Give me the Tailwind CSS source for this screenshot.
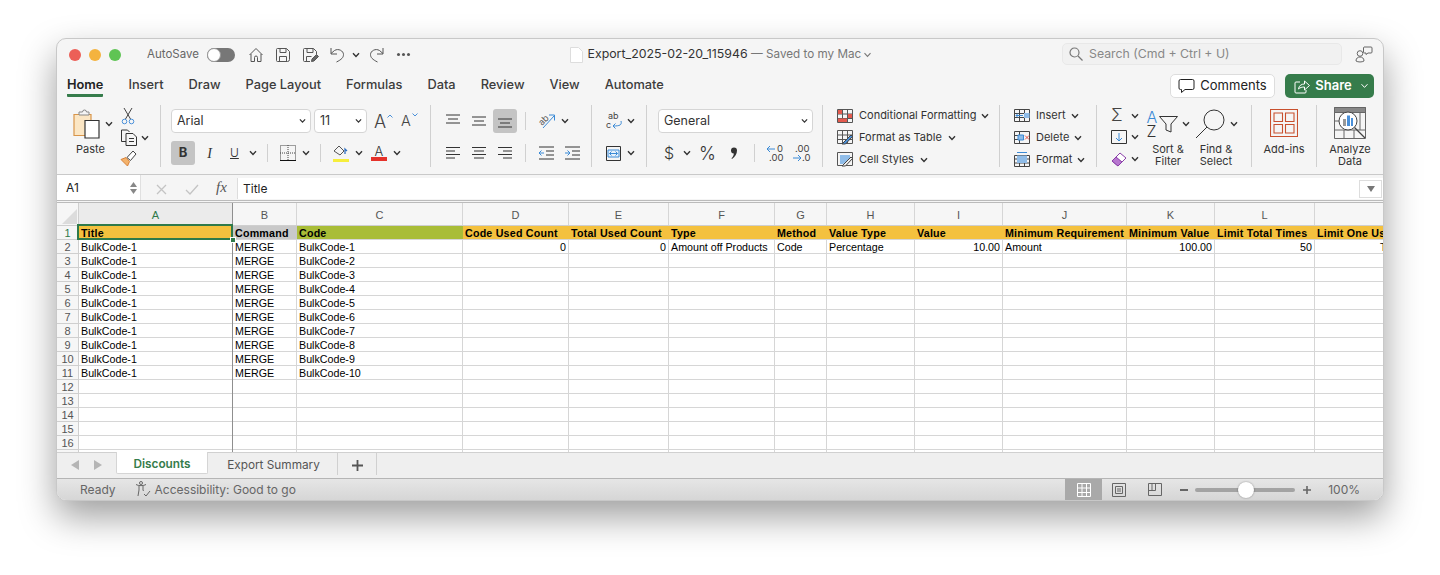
<!DOCTYPE html>
<html lang="en">
<head>
<meta charset="UTF-8">
<title>Export_2025-02-20_115946</title>
<script src="https://cdn.jsdelivr.net/npm/@tailwindcss/browser@4"></script>
</head>
<body class="bg-white h-[575px] overflow-hidden font-['Inter','Liberation_Sans',sans-serif]">

<svg class="hidden">
  <symbol id="cv" viewBox="0 0 8 6"><path d="M1 1.200 4 4.400 7 1.200" fill="none" stroke="#333" stroke-width="1.400"/></symbol>
</svg>

<div class="pt-[38px] px-[56px]">
  <!-- window -->
  <div class="relative w-[1328px] h-[463px] rounded-[10px] bg-[#f5f5f5] border border-[#c8c8c8] overflow-hidden flex flex-col shadow-[0_16px_36px_rgba(0,0,0,0.38)]" id="win">

    <!-- title bar -->
    <div class="h-[33px] pb-[2px] shrink-0 flex items-center relative">
      <div class="flex gap-2 ml-[12px]">
        <span class="w-3 h-3 rounded-full bg-[#ec5f57]"></span>
        <span class="w-3 h-3 rounded-full bg-[#f4b33f]"></span>
        <span class="w-3 h-3 rounded-full bg-[#5fc454]"></span>
      </div>
      <span class="ml-[26px] text-[11.500px] text-[#666] w-[60px]">AutoSave</span>
      <span class="relative w-[28px] h-[14px] rounded-full bg-[#777]"><span class="absolute left-0 top-0 w-[14px] h-[14px] rounded-full bg-white border border-[#999]"></span></span>
      <svg class="ml-[13px]" width="16" height="16" viewBox="0 0 16 16" fill="none" stroke="#555"><path d="M1.500 8 8 1.500 14.500 8M3 7v7.500h3.500V10.500a1.500 1.500 0 013 0v4H13V7"/></svg>
      <svg class="ml-[11px]" width="16" height="16" viewBox="0 0 16 16" fill="none" stroke="#555"><path d="M2.500 1.500h9l3 3v8a2 2 0 01-2 2h-10a1 1 0 01-1-1v-11a1 1 0 011-1zM5 1.500v4h6v-4M4.500 14.500v-5h7v5"/></svg>
      <svg class="ml-[11px]" width="17" height="16" viewBox="0 0 17 16" fill="none" stroke="#555"><path d="M8 14.500H2.500a1 1 0 01-1-1v-11a1 1 0 011-1h9l3 3v3M5 1.500v4h6v-4M4.500 14v-4.500h5"/><path d="M9.500 14.500l.5-2.500 4.500-4.500 2 2-4.500 4.500z" fill="#666"/></svg>
      <svg class="ml-[11px]" width="15" height="16" viewBox="0 0 15 16" fill="none" stroke="#555"><path d="M1 1v6h6M1 6.500 4.500 3.500c4-2.500 9 .5 9 4 0 3-2 5-7 7.500"/></svg>
      <svg class="ml-[7px]" width="8" height="6"><use href="#cv"/></svg>
      <svg class="ml-[9px]" width="15" height="16" viewBox="0 0 15 16" fill="none" stroke="#555"><path d="M14 1v6H8M14 6.500 10.500 3.500c-4-2.500-9 .5-9 4 0 3 2 5 7 7.500"/></svg>
      <span class="ml-[13px] flex gap-[2.500px]"><i class="w-[2.500px] h-[2.500px] rounded-full bg-[#555]"></i><i class="w-[2.500px] h-[2.500px] rounded-full bg-[#555]"></i><i class="w-[2.500px] h-[2.500px] rounded-full bg-[#555]"></i></span>
      <svg class="ml-[160px]" width="13" height="16" viewBox="0 0 13 16" fill="#fff" stroke="#ddd"><path d="M.5.500h8l4 4v11H.5z"/></svg>
      <span class="ml-[5px] text-[12.350px] text-[#333] whitespace-nowrap">Export_2025-02-20_115946 <span class="text-[#777] text-[11.700px]">— Saved to my Mac</span></span>
      <svg class="ml-[2px]" width="9" height="6" viewBox="0 0 8 6"><path d="M1 1.200 4 4.400 7 1.200" fill="none" stroke="#777" stroke-width="1.100"/></svg>
      <div class="absolute left-[1005px] top-[4px] w-[280px] h-[22px] rounded-[5px] bg-[#f1f1f1] border border-[#e8e8e8] flex items-center pl-[6px]">
        <svg width="14" height="14" viewBox="0 0 14 14" fill="none" stroke="#777" stroke-width="1.200"><circle cx="5.500" cy="5.500" r="4.500"/><path d="M9 9l4.500 4.500"/></svg>
        <span class="ml-[6px] text-[12.300px] text-[#888] whitespace-nowrap">Search (Cmd + Ctrl + U)</span>
      </div>
      <svg class="absolute left-[1298px] top-[6px]" width="18" height="18" viewBox="0 0 18 18" fill="none" stroke="#666"><circle cx="5" cy="8.500" r="2.800"/><path d="M1 16c0-3 2-4 4-4s4 1 4 4c-2 1.300-6 1.300-8 0zM9 2h7a1 1 0 011 1v4a1 1 0 01-1 1h-3l-2 1.500V8H9.500a1 1 0 01-1-1V3a1 1 0 01.5-1z"/></svg>
    </div>

    <!-- tabs -->
    <div class="h-[29px] shrink-0 flex items-start pl-[10px] relative text-[12.800px] font-medium text-[#3c3c3c]">
      <div class="flex gap-[25px] pt-[3px]">
        <span class="font-semibold text-[#222] border-b-[3px] border-[#367c4b] h-[22px] rounded-b-[1px]">Home</span>
        <span>Insert</span><span>Draw</span><span>Page Layout</span><span>Formulas</span><span>Data</span><span>Review</span><span>View</span><span>Automate</span>
      </div>
      <div class="absolute left-[1113px] top-[2px] w-[105px] h-[24px] rounded-[5px] bg-white border border-[#ddd] flex items-center justify-center gap-[5px] font-normal text-[13px] text-[#222]">
        <svg width="17" height="16" viewBox="0 0 17 16" fill="none" stroke="#222"><path d="M2.500 1.500h12a1.500 1.500 0 011.500 1.500v7a1.500 1.500 0 01-1.500 1.500H7L3.500 14.500v-3h-1A1.500 1.500 0 011 10V3a1.500 1.500 0 011.500-1.500z"/></svg>
        Comments
      </div>
      <div class="absolute left-[1228px] top-[2px] w-[89px] h-[24px] pl-[4px] rounded-[5px] bg-[#367c4b] flex items-center justify-center gap-[5px] font-semibold text-[13px] text-white">
        <svg width="16" height="15" viewBox="0 0 16 15" fill="none" stroke="#fff"><path d="M6 3H2a1 1 0 00-1 1v9a1 1 0 001 1h9a1 1 0 001-1v-2M4.500 10c.5-3.500 3-5 6-5V2l5 4.500-5 4.500V8c-2.500 0-4.500.5-6 2z"/></svg>
        Share
        <svg class="ml-[3px]" width="9" height="6" viewBox="0 0 8 6"><path d="M1 1.200 4 4.400 7 1.200" fill="none" stroke="#fff" stroke-width="1"/></svg>
      </div>
    </div>

    <!-- ribbon -->
    <div class="h-[74px] shrink-0 flex border-b border-[#c9c9c9] text-[#333]">

      <!-- clipboard -->
      <div class="w-[104px] h-[62px] mt-[4px] border-r border-[#d0d0d0] flex pl-[14px] shrink-0">
        <div class="w-[42px] flex flex-col pt-[3px]">
          <div class="flex items-start">
            <svg class="shrink-0" width="30" height="32" viewBox="0 0 30 32" fill="none"><path d="M3 6.500h17v21H3z" fill="#fbe6c4" stroke="#d8954a" stroke-width="1.200"/><path d="M8 6V4h3.500a2 2 0 014 0H18v3H8z" fill="#f5f5f5" stroke="#888"/><path d="M14 12.500h14V30H14z" fill="#fff" stroke="#333" stroke-width="1.200"/></svg>
            <svg class="ml-[4px] mt-[13px]" width="8" height="6"><use href="#cv"/></svg>
          </div>
          <span class="text-[11px] mt-[2px] ml-[5px] leading-[14px]">Paste</span>
        </div>
        <div class="flex flex-col items-start ml-[7px] gap-[4px] pt-[2px]">
          <svg class="ml-[1px]" width="14" height="18" viewBox="0 0 14 18" fill="none" stroke="#444"><path d="M3 1l6.500 11M11 1 4.500 12"/><circle cx="3.500" cy="14.500" r="2.300" stroke="#4a90d9"/><circle cx="10.500" cy="14.500" r="2.300" stroke="#4a90d9"/></svg>
          <div class="flex items-center">
            <svg width="18" height="17" viewBox="0 0 18 17" fill="none" stroke="#333"><path d="M6 12.500H1.500V1h6l2 2"/><path d="M6 4.500h7l3.500 3.500v8.500H6zM9 9.500h5M9 12.500h5"/></svg>
            <svg class="ml-[3px]" width="8" height="6"><use href="#cv"/></svg>
          </div>
          <svg width="17" height="16" viewBox="0 0 17 16" fill="none"><path d="M1 9.500l5-2 3.500 4-2 4.500-6.500-6.500z" fill="#f3b26b" stroke="#d8823a"/><path d="M7 7.500l6-6.500 3 3-5.500 6.500z" fill="#fff" stroke="#444"/></svg>
        </div>
      </div>

      <!-- font -->
      <div class="w-[270px] h-[62px] mt-[4px] border-r border-[#d0d0d0] pl-[10px] pt-[4px] shrink-0">
        <div class="flex items-center h-[24px]">
          <div class="w-[140px] h-[24px] rounded-[4px] bg-white border border-[#d5d5d5] flex items-center justify-between pl-[5px] pr-[4px] text-[12.500px]"><span>Arial</span><svg width="7" height="6"><use href="#cv"/></svg></div>
          <div class="ml-[3px] w-[53px] h-[24px] rounded-[4px] bg-white border border-[#d5d5d5] flex items-center justify-between pl-[5px] pr-[4px] text-[12.500px]"><span>11</span><svg width="7" height="6"><use href="#cv"/></svg></div>
          <span class="ml-[7px] text-[18px] font-light text-[#444] relative w-[20px]">A<svg class="absolute left-[13px] top-[6px]" width="6" height="4" viewBox="0 0 6 4"><path d="M.5 3.500 3 1l2.500 2.500" fill="none" stroke="#4a90d9"/></svg></span>
          <span class="ml-[7px] text-[14.500px] font-light text-[#444] relative w-[20px]">A<svg class="absolute left-[11px] top-[3px]" width="6" height="4" viewBox="0 0 6 4"><path d="M.5.500 3 3 5.500.5" fill="none" stroke="#4a90d9"/></svg></span>
        </div>
        <div class="flex items-center h-[24px] mt-[8px]">
          <span class="w-[24px] h-[24px] rounded-[3px] bg-[#c4c4c4] flex items-center justify-center text-[13px] font-bold">B</span>
          <span class="w-[13px] ml-[8px] text-[14px] italic font-['Liberation_Serif',serif] text-center">I</span>
          <span class="ml-[14px] w-[9px] text-[12px] underline font-light">U</span>
          <svg class="ml-[10px]" width="8" height="6"><use href="#cv"/></svg>
          <span class="w-px h-[18px] bg-[#d0d0d0] ml-[10px]"></span>
          <svg class="ml-[12px]" width="16" height="16" viewBox="0 0 16 16" fill="none" stroke="#444" stroke-dasharray="1 1"><path d="M.5.500h15v15H.5zM8 0v16M0 8h16"/><path d="M0 15.500h16" stroke-dasharray="none" stroke="#111"/></svg>
          <svg class="ml-[6px]" width="8" height="6"><use href="#cv"/></svg>
          <span class="w-px h-[18px] bg-[#d0d0d0] ml-[10px]"></span>
          <svg class="ml-[12px]" width="16" height="18" viewBox="0 0 16 18" fill="none"><path d="M1 7l5-5 5 5-4 4z" stroke="#555"/><path d="M12 10V5l2 2" stroke="#2f6fc0" stroke-width="1.300"/><path d="M0 15h16v3H0z" fill="#f6ee3c"/></svg>
          <svg class="ml-[6px]" width="8" height="6"><use href="#cv"/></svg>
          <div class="ml-[8px] w-[16px] h-[18px] flex flex-col items-center"><span class="text-[13px] leading-[14px] font-light">A</span><span class="w-[16px] h-[4px] bg-[#e5322a] mt-[-1px]"></span></div>
          <svg class="ml-[6px]" width="8" height="6"><use href="#cv"/></svg>
        </div>
      </div>

      <!-- alignment -->
      <div class="w-[161px] h-[62px] mt-[4px] border-r border-[#d0d0d0] pl-[14px] pt-[4px] shrink-0">
        <div class="flex items-center h-[24px]">
          <svg width="16" height="16" viewBox="0 0 16 16" stroke="#333"><path d="M1 2h14M3 6h10M1 10h14"/></svg>
          <svg class="ml-[10px]" width="16" height="16" viewBox="0 0 16 16" stroke="#333"><path d="M1 4h14M3 8h10M1 12h14"/></svg>
          <span class="ml-[6px] w-[24px] h-[24px] rounded-[3px] bg-[#c4c4c4] flex items-center justify-center"><svg width="16" height="16" viewBox="0 0 16 16" stroke="#333"><path d="M1 6h14M3 10h10M1 14h14"/></svg></span>
          <span class="w-px h-[18px] bg-[#d0d0d0] ml-[8px]"></span>
          <svg class="ml-[12px] overflow-visible" width="18" height="18" viewBox="0 0 18 18" fill="none" stroke="#555"><text x="1" y="11" font-size="9" fill="#555" stroke="none" transform="rotate(-45 6 9)">ab</text><path d="M5 16 16 4M11 3H16.500V8.500" stroke="#3a8ad6"/></svg>
          <svg class="ml-[5px]" width="8" height="6"><use href="#cv"/></svg>
        </div>
        <div class="flex items-center h-[24px] mt-[8px]">
          <svg width="16" height="16" viewBox="0 0 16 16" stroke="#333"><path d="M1 2.500h14M1 6h9M1 9.500h14M1 13h9"/></svg>
          <svg class="ml-[10px]" width="16" height="16" viewBox="0 0 16 16" stroke="#333"><path d="M1 2.500h14M3 6h10M1 9.500h14M3 13h10"/></svg>
          <svg class="ml-[10px]" width="16" height="16" viewBox="0 0 16 16" stroke="#333"><path d="M1 2.500h14M6 6h9M1 9.500h14M6 13h9"/></svg>
          <span class="w-px h-[18px] bg-[#d0d0d0] ml-[12px]"></span>
          <svg class="ml-[12px]" width="16" height="14" viewBox="0 0 16 14" fill="none"><path d="M1 1h15M8 5h8M8 9h8M1 13h15" stroke="#333"/><path d="M6 7H1M3.500 4.500 1 7l2.500 2.500" stroke="#3a8ad6"/></svg>
          <svg class="ml-[10px]" width="16" height="14" viewBox="0 0 16 14" fill="none"><path d="M1 1h15M8 5h8M8 9h8M1 13h15" stroke="#333"/><path d="M1 7h5M3.500 4.500 6 7 3.500 9.500" stroke="#3a8ad6"/></svg>
        </div>
      </div>

      <!-- wrap / merge -->
      <div class="w-[55px] h-[62px] mt-[4px] border-r border-[#d0d0d0] pl-[14px] pt-[4px] shrink-0">
        <div class="flex items-center h-[24px]">
          <svg class="overflow-visible" width="16" height="18" viewBox="0 0 16 18" fill="none"><text x="2" y="7" font-size="9" fill="#444">ab</text><text x="0" y="16" font-size="9" fill="#444">c</text><path d="M15 9c1 4-1 5-8 5M9.500 11.500 7 14l2.500 2.500" stroke="#3a8ad6"/></svg>
          <svg class="ml-[5px]" width="8" height="6"><use href="#cv"/></svg>
        </div>
        <div class="flex items-center h-[24px] mt-[8px]">
          <svg width="15" height="15" viewBox="0 0 15 15" fill="none" stroke="#333"><path d="M.5.500h14v14H.5z"/><path d="M2 4h11v7H2z" fill="#e7f1fb" stroke="#3a8ad6"/><path d="M3.500 7.500h8M5.500 5.500l-2 2 2 2M9.500 5.500l2 2-2 2" stroke="#3a8ad6"/></svg>
          <svg class="ml-[6px]" width="8" height="6"><use href="#cv"/></svg>
        </div>
      </div>

      <!-- number -->
      <div class="w-[176px] h-[62px] mt-[4px] border-r border-[#d0d0d0] pl-[11px] pt-[4px] shrink-0">
        <div class="w-[155px] h-[24px] rounded-[4px] bg-white border border-[#d5d5d5] flex items-center justify-between pl-[5px] pr-[4px] text-[12.500px]"><span>General</span><svg width="7" height="6"><use href="#cv"/></svg></div>
        <div class="flex items-center h-[24px] mt-[8px]">
          <span class="ml-[6px] w-[10px] text-[16px] font-light">$</span>
          <svg class="ml-[9px]" width="8" height="6"><use href="#cv"/></svg>
          <span class="ml-[8px] text-[18px] font-light w-[18px]">%</span>
          <svg class="ml-[13px]" width="8" height="13" viewBox="0 0 8 13" fill="#333"><path d="M1 3.500a3 3 0 116 0c0 3.500-2 6.500-5 8.500l-.5-.7c1.500-1.500 2.300-3 2.300-4.800A3 3 0 011 3.500z"/></svg>
          <span class="w-px h-[18px] bg-[#d0d0d0] ml-[16px]"></span>
          <div class="ml-[11px] w-[18px] relative h-[18px] text-[9.500px] leading-[9px] text-[#444]"><span class="absolute left-[11px] top-0">0</span><span class="absolute left-[3px] top-[9px]">.00</span><svg class="absolute left-0 top-[1px]" width="10" height="8" viewBox="0 0 10 8" fill="none" stroke="#3a8ad6"><path d="M9 4H1M4 1 1 4l3 3"/></svg></div>
          <div class="ml-[8px] w-[18px] relative h-[18px] text-[9.500px] leading-[9px] text-[#444]"><span class="absolute left-[3px] top-0">.00</span><span class="absolute left-[10px] top-[9px]">.0</span><svg class="absolute left-0 top-[10px]" width="10" height="8" viewBox="0 0 10 8" fill="none" stroke="#3a8ad6"><path d="M1 4h8M6 1l3 3-3 3"/></svg></div>
        </div>
      </div>

      <!-- styles -->
      <div class="w-[177px] h-[62px] mt-[4px] border-r border-[#d0d0d0] pl-[14px] pt-[3px] flex flex-col gap-[7px] text-[11px] shrink-0">
        <div class="flex items-center h-[15px]">
          <svg width="16" height="14" viewBox="0 0 16 14" fill="#fff" stroke="#555"><path d="M.5.500h15v13H.5zM.5 5h15M.5 9.500h15M5.500.500v13M10.500.500v13" fill="none"/><path d="M1 1h4v4H1zM11 5h4v4h-4zM1 9.500h9v3.500H1z" fill="#e35a4e" stroke="none"/></svg>
          <span class="ml-[6px]">Conditional Formatting</span><svg class="ml-[5px]" width="8" height="6"><use href="#cv"/></svg>
        </div>
        <div class="flex items-center h-[15px]">
          <svg width="16" height="15" viewBox="0 0 16 15" fill="none" stroke="#555"><path d="M.5.500h15v13H.5zM.5 5h15M.5 9.500h15M5.500.500v13M10.500.500v13"/><path d="M5 14 14 5l1.500 1.500-7 7.500z" fill="#4a90d9" stroke="#444"/></svg>
          <span class="ml-[6px]">Format as Table</span><svg class="ml-[6px]" width="8" height="6"><use href="#cv"/></svg>
        </div>
        <div class="flex items-center h-[15px]">
          <svg width="16" height="15" viewBox="0 0 16 15" fill="none" stroke="#555"><path d="M.5.500h15v13H.5z"/><path d="M3 3h10v4L6 12H3z" fill="#8fbce8" stroke="none"/><path d="M5 14 14 5l1.500 1.500-7 7.500z" fill="#eee" stroke="#444"/></svg>
          <span class="ml-[6px]">Cell Styles</span><svg class="ml-[6px]" width="8" height="6"><use href="#cv"/></svg>
        </div>
      </div>

      <!-- cells -->
      <div class="w-[97px] h-[62px] mt-[4px] border-r border-[#d0d0d0] pl-[14px] pt-[3px] flex flex-col gap-[7px] text-[11px] shrink-0">
        <div class="flex items-center h-[15px]">
          <svg width="16" height="13" viewBox="0 0 16 13" fill="none" stroke="#444"><path d="M.5.500h15v12H.5zM.5 4.500h15M.5 8.500h15M5.500.500v12M10.500.500v12"/><path d="M10 4h5.500v5H10z" fill="#8fbce8" stroke="none"/><path d="M9 6.500H2M4 4.500l-2 2 2 2" stroke="#3a8ad6"/></svg>
          <span class="ml-[6px]">Insert</span><svg class="ml-[5px]" width="8" height="6"><use href="#cv"/></svg>
        </div>
        <div class="flex items-center h-[15px]">
          <svg width="16" height="13" viewBox="0 0 16 13" fill="none" stroke="#444"><path d="M.5.500h15v12H.5zM.5 4.500h9M.5 8.500h9M5.500.500v12"/><path d="M4 4h5.500v5H4z" fill="#8fbce8" stroke="#3a8ad6"/><path d="M11 4.500l4 4M15 4.500l-4 4" stroke="#e3554a"/></svg>
          <span class="ml-[6px]">Delete</span><svg class="ml-[5px]" width="8" height="6"><use href="#cv"/></svg>
        </div>
        <div class="flex items-center h-[15px]">
          <svg width="16" height="15" viewBox="0 0 16 15" fill="none" stroke="#444"><path d="M.5 3.500h15v11H.5zM.5 7h15M.5 11h15M5.500 3.500v11M10.500 3.500v11"/><path d="M3 3.500h10V11H3z" fill="#8fbce8" stroke="none"/><path d="M3 .5h10" stroke="#3a8ad6"/></svg>
          <span class="ml-[6px]">Format</span><svg class="ml-[5px]" width="8" height="6"><use href="#cv"/></svg>
        </div>
      </div>

      <!-- editing -->
      <div class="w-[155px] h-[62px] mt-[4px] border-r border-[#d0d0d0] flex shrink-0">
        <div class="pl-[14px] w-[48px] pt-[2px] flex flex-col gap-[5px] shrink-0">
          <div class="flex items-center h-[17px]"><span class="w-[16px] text-[17px] font-light leading-[17px] text-[#444]">Σ</span><svg class="ml-[4px]" width="8" height="6"><use href="#cv"/></svg></div>
          <div class="flex items-center h-[17px]"><svg width="16" height="14" viewBox="0 0 16 14" fill="none" stroke="#333"><path d="M.5.500h15v13H.5z"/><path d="M8 3v8M5 8l3 3 3-3" stroke="#3a8ad6"/></svg><svg class="ml-[4px]" width="8" height="6"><use href="#cv"/></svg></div>
          <div class="flex items-center h-[17px]"><svg width="16" height="16" viewBox="0 0 16 16" stroke="#8a3fa8"><path d="M1 10 9 2l6 5-8 8z" fill="#fff"/><path d="M1 10 5 6l6 5-4 4z" fill="#b777cf"/></svg><svg class="ml-[4px]" width="8" height="6"><use href="#cv"/></svg></div>
        </div>
        <div class="w-[46px] flex flex-col items-center shrink-0">
          <div class="flex items-center h-[30px] mt-[4px]">
            <div class="relative w-[11px] h-[28px] text-[16px] leading-[14px] font-light shrink-0"><span class="absolute left-0 top-0 text-[#3a8ad6]">A</span><span class="absolute left-0 top-[14px] text-[#333]">Z</span></div>
            <svg class="shrink-0 ml-[1px]" width="19" height="17" viewBox="0 0 19 17" fill="none" stroke="#333"><path d="M.5.500h18L12 8v8l-5-2V8z"/></svg>
            <svg class="ml-[4px] shrink-0" width="8" height="6"><use href="#cv"/></svg>
          </div>
          <span class="text-[11px] leading-[12px] mt-[4px] text-center whitespace-nowrap">Sort &amp;<br>Filter</span>
        </div>
        <div class="w-[50px] flex flex-col items-center shrink-0">
          <div class="flex items-center h-[30px] mt-[4px]">
            <svg class="shrink-0" width="30" height="30" viewBox="0 0 30 30" fill="none" stroke="#333"><circle cx="19" cy="11" r="10"/><path d="M12 18 1 29"/></svg>
            <svg class="ml-[5px] shrink-0" width="8" height="6"><use href="#cv"/></svg>
          </div>
          <span class="text-[11px] leading-[12px] mt-[4px] text-center whitespace-nowrap">Find &amp;<br>Select</span>
        </div>
      </div>

      <!-- add-ins -->
      <div class="w-[65px] h-[62px] mt-[4px] border-r border-[#d0d0d0] flex flex-col items-center shrink-0">
        <svg class="mt-[4px]" width="28" height="28" viewBox="0 0 28 28" fill="none" stroke="#c8502e" stroke-width="1.100"><path d="M.5.500h27v27H.5zM4 4h8.500v8.500H4zM15.500 4H24v8.500h-8.500zM4 15.500h8.500V24H4zM15.500 15.500H24V24h-8.500z"/></svg>
        <span class="text-[11px] leading-[12px] mt-[6px]">Add-ins</span>
      </div>

      <!-- analyze -->
      <div class="flex-1 h-[62px] mt-[4px] flex flex-col items-center">
        <svg class="mt-[2px]" width="32" height="32" viewBox="0 0 32 32" fill="none" stroke="#666"><path d="M.5.500h31v31H.5z"/><path d="M.5.500h31v5H.5z" fill="#888"/><path d="M.5 14h5M.5 23h31M10 23v9M20 23v9M26 5v18"/><circle cx="14" cy="14" r="9" fill="#fff" stroke="#444"/><path d="M9 12h3v7H9z" fill="#999" stroke="none"/><path d="M13 8.500h3V19h-3z" fill="#4a90d9" stroke="none"/><path d="M17 11h2v8h-2z" fill="#4a90d9" stroke="none"/><path d="M20.500 20.500 31 31" stroke="#444" stroke-width="1.300"/></svg>
        <span class="text-[11px] leading-[12px] mt-[4px] text-center">Analyze<br>Data</span>
      </div>
    </div>

    <!-- formula bar -->
    <div class="h-[28px] shrink-0 flex border-b-[3px] border-double border-[#bbb]">
      <div class="w-[84px] h-[25px] bg-white pl-[9px] pr-[3px] flex items-center justify-between border-r border-[#e0e0e0] text-[12px] text-[#222]">
        A1
        <span class="flex flex-col gap-[2px]"><svg width="7" height="5" viewBox="0 0 7 5" fill="#888"><path d="M3.500 0 7 5H0z"/></svg><svg width="7" height="5" viewBox="0 0 7 5" fill="#888"><path d="M3.500 5 7 0H0z"/></svg></span>
      </div>
      <svg class="ml-[15px] mt-[9px]" width="11" height="11" viewBox="0 0 11 11" stroke="#c4c4c4" stroke-width="1.300"><path d="M1 1l9 9M10 1l-9 9"/></svg>
      <svg class="ml-[18px] mt-[9px]" width="14" height="11" viewBox="0 0 14 11" fill="none" stroke="#c4c4c4" stroke-width="1.300"><path d="M1 6l4 4 8-9"/></svg>
      <span class="ml-[17px] w-[20px] text-[15px] leading-[25px] italic font-['Liberation_Serif',serif] text-[#555]">fx</span>
      <div class="ml-px flex-1 h-[21px] mt-[3px] bg-white border-l border-[#ddd] pl-[5px] flex items-center justify-between text-[12px] text-[#222]">
        Title
        <span class="w-[23px] h-[18px] border border-[#ddd] bg-white mr-px flex items-center justify-center"><svg width="8" height="6" viewBox="0 0 8 6" fill="#777"><path d="M0 0h8L4 6z"/></svg></span>
      </div>
    </div>

    <!-- sheet -->
    <div class="flex-1 relative bg-white overflow-hidden" id="sheet">
      <div class="h-[23px] flex bg-[#f6f6f6] border-b border-[#cfcfcf] text-[11px] text-[#555] font-['Liberation_Sans',sans-serif]">
        <div class="w-[22px] shrink-0 relative border-r border-[#cfcfcf]"><svg class="absolute right-[1px] bottom-[1px]" width="15" height="15"><path d="M15 0v15H0z" fill="#dcdcdc"/></svg></div>
        <div class="flex-1 grid grid-cols-[154px_64px_166px_106px_100px_106px_52px_88px_88px_124px_88px_100px_160px]" id="colhead"></div>
      </div>
      <div id="rows"></div>
      <!-- freeze line and selected cell -->
      <div class="absolute left-[175px] top-0 bottom-0 w-px bg-[#8f8f8f]"></div>
      <div class="absolute left-[20px] top-[21px] w-[156px] h-[16px] border-2 border-[#2f7a4a]"></div>
      <div class="absolute left-[173px] top-[34px] w-[6px] h-[6px] bg-[#2f7a4a] border border-white"></div>
    </div>

    <!-- sheet tabs -->
    <div class="h-[26px] shrink-0 flex bg-[#efefef] border-t border-[#d0d0d0] text-[11.800px] text-[#555] relative">
      <svg class="ml-[14px] mt-[7px]" width="8" height="10" viewBox="0 0 8 10" fill="#b5b5b5"><path d="M8 0v10L0 5z"/></svg>
      <svg class="ml-[15px] mt-[7px]" width="8" height="10" viewBox="0 0 8 10" fill="#b5b5b5"><path d="M0 0v10l8-5z"/></svg>
      <div class="ml-[14px] w-[92px] h-[22px] pt-[5px] bg-white border-x border-b border-[#d5d5d5] rounded-b-[2px] flex items-center justify-center font-semibold text-[#367c4b] -mt-px">Discounts</div>
      <div class="w-[130px] h-[22px] pt-[4px] pl-[2px] flex items-center justify-center border-r border-[#d0d0d0]">Export Summary</div>
      <div class="w-[39px] h-[22px] pt-[2px] pl-px flex items-center justify-center border-r border-[#d0d0d0]"><svg width="11" height="11" viewBox="0 0 11 11" stroke="#555" stroke-width="1.800"><path d="M5.500 0v11M0 5.500h11"/></svg></div>
    </div>

    <!-- status bar -->
    <div class="h-[22px] shrink-0 flex items-center bg-linear-to-b from-[#e6e6e6] to-[#d6d6d6] border-t border-[#b5b5b5] text-[12px] text-[#666]">
      <span class="ml-[23px]">Ready</span>
      <svg class="ml-[19px]" width="16" height="17" viewBox="0 0 16 17" fill="none" stroke="#666"><circle cx="6" cy="2" r="1.500"/><path d="M1 3.500c2 1.500 8 1.500 10 0M4 5v4l-1 6M8 5v4l.5 1M9 13l2 2 4-5"/></svg>
      <span class="ml-[4px]">Accessibility: Good to go</span>
      <div class="ml-auto flex items-center h-full">
        <span class="w-[37px] h-full bg-[#a9a9a9] flex items-center justify-center"><svg width="14" height="14" viewBox="0 0 14 14" fill="none" stroke="#fff"><path d="M.5.500h13v13H.5zM.5 5h13M.5 9.500h13M5 .500v13M9.500.500v13"/></svg></span>
        <svg class="ml-[10px]" width="14" height="14" viewBox="0 0 14 14" fill="none" stroke="#666"><path d="M.5.500h13v13H.5zM3.500 3.500h7v7h-7zM5 6h4M5 8h4"/></svg>
        <svg class="ml-[22px]" width="14" height="13" viewBox="0 0 14 13" fill="none" stroke="#666"><path d="M.5.500h13v12H.5zM.5 7.500h7V.5M4 .5v7"/></svg>
        <span class="ml-[18px] w-[8px] h-[2px] bg-[#666]"></span>
        <span class="ml-[7px] w-[100px] h-[4px] rounded-full bg-[#a3a3a3] relative"><span class="absolute left-[43px] top-[-6px] w-[16px] h-[16px] rounded-full bg-white shadow-[0_0_2px_rgba(0,0,0,0.4)]"></span></span>
        <svg class="ml-[8px]" width="8" height="8" viewBox="0 0 8 8" stroke="#666" stroke-width="1.600"><path d="M4 0v8M0 4h8"/></svg>
        <span class="ml-[17px] mr-[23px]">100%</span>
      </div>
    </div>
  </div>
</div>

<script>
  // data for the sheet
  var letters = 'ABCDEFGHIJKL'.split('');
  var orange = 'bg-[#f4c13e]', olive = 'bg-[#a9bd37]', grey = 'bg-[#c9c9c9]';
  var titles = [['Title',orange],['Command',grey],['Code',olive],['Code Used Count',orange],['Total Used Count',orange],['Type',orange],['Method',orange],['Value Type',orange],['Value',orange],['Minimum Requirement',orange],['Minimum Value',orange],['Limit Total Times',orange],['Limit One Use',orange]];
  var gridCols = 'grid grid-cols-[154px_64px_166px_106px_100px_106px_52px_88px_88px_124px_88px_100px_160px] flex-1';
  var cellCls = 'border-r border-b border-[#d6d6d6] h-[14px] leading-[15px] px-[2px] overflow-hidden whitespace-nowrap ';

  var head = '';
  letters.forEach(function (l, i) {
    head += '<div class="flex items-center justify-center pt-[2px] border-r border-[#d6d6d6] ' + (i == 0 ? 'bg-[#ebebeb] text-[#2f7a4a]' : '') + '">' + l + '</div>';
  });
  document.getElementById('colhead').innerHTML = head;

  var html = '';
  for (var r = 1; r <= 17; r++) {
    var row = '<div class="flex h-[14px] text-[10.700px] text-black font-[\'Liberation_Sans\',sans-serif]">';
    row += '<div class="w-[22px] shrink-0 bg-[#f6f6f6] border-r border-b border-[#cfcfcf] text-center text-[11px] leading-[14px] ' + (r == 1 ? 'text-[#2f7a4a]' : 'text-[#555]') + '">' + (r <= 16 ? r : '') + '</div>';
    row += '<div class="' + gridCols + '">';
    for (var c = 0; c < 13; c++) {
      var text = '', extra = '';
      if (r == 1) {
        text = titles[c][0];
        extra = 'font-bold tracking-[0.2px] border-r-0 ' + titles[c][1];
      } else if (r <= 11) {
        if (c == 0) text = 'BulkCode-1';
        if (c == 1) text = 'MERGE';
        if (c == 2) text = 'BulkCode-' + (r - 1);
      }
      if (r == 2) {
        var first = {3:'0',4:'0',5:'Amount off Products',6:'Code',7:'Percentage',8:'10.00',9:'Amount',10:'100.00',11:'50',12:'TRUE'};
        if (first[c]) text = first[c];
        if (c == 3 || c == 4 || c == 8 || c == 10 || c == 11) extra = 'text-right';
        if (c == 12) extra = 'text-center';
      }
      row += '<div class="' + cellCls + extra + '">' + text + '</div>';
    }
    html += row + '</div></div>';
  }
  document.getElementById('rows').innerHTML = html;
</script>
</body>
</html>
